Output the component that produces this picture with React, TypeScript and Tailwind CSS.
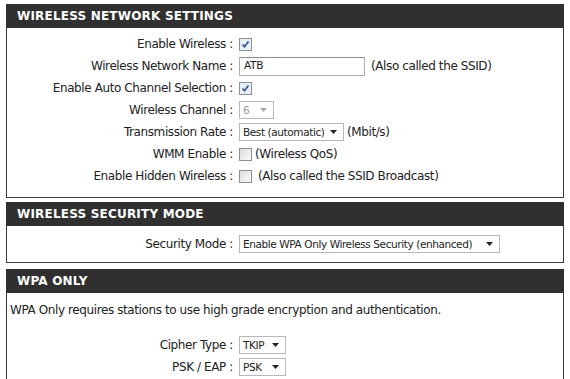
import React from 'react';

function Check({ checked = false }: { checked?: boolean }) {
  return (
    <span className="inline-flex h-[13px] w-[13px] shrink-0 items-center justify-center border border-[#8e8f8f] bg-gradient-to-br from-[#dcdcdc] to-[#fbfbfb]">
      {checked && (
        <svg viewBox="0 0 11 11" className="h-[11px] w-[11px]">
          <rect x="0" y="0" width="11" height="11" fill="#e6eef7" />
          <path d="M2.5 5.5 L4.5 7.8 L8.5 2.5" fill="none" stroke="#2d4e93" strokeWidth="1.6" />
        </svg>
      )}
    </span>
  );
}

function Select({ value, width, disabled = false }: { value: string; width: string; disabled?: boolean }) {
  return (
    <span
      className={`inline-flex h-[18px] items-center justify-between border border-[#b5b8bd] bg-white pl-[3px] pr-[6px] text-[10.5px] tracking-[-0.4px] ${width} ${
        disabled ? 'text-[#9a9a9a]' : 'text-[#222]'
      }`}
    >
      <span className="leading-none">{value}</span>
      <svg viewBox="0 0 7 4" className="h-[4px] w-[7px] shrink-0">
        <path d="M0 0 H7 L3.5 4 Z" fill={disabled ? '#a8a8a8' : '#222'} />
      </svg>
    </span>
  );
}

function Row({ label, children }: { label: string; children: React.ReactNode }) {
  return (
    <div className="flex h-[22px] items-center">
      <div className="w-[226px] shrink-0 whitespace-nowrap text-right">{label}</div>
      <div className="ml-[6px] flex items-center gap-[3px] whitespace-nowrap">{children}</div>
    </div>
  );
}

function Section({ title, children, className = '' }: { title: string; children: React.ReactNode; className?: string }) {
  return (
    <section className={className}>
      <h2 className="flex h-[24px] items-center bg-[#303030] pl-[11px] text-[12px] font-bold tracking-[0.2px] text-white">
        {title}
      </h2>
      <div className="border-x border-b border-[#3a3a3a] bg-white">{children}</div>
    </section>
  );
}

export default function App() {
  return (
    <div className="h-[379px] w-[570px] overflow-hidden bg-white font-['DejaVu_Sans',Verdana,sans-serif] text-[12px] tracking-[-0.4px] text-[#222]">
      <div className="ml-[6px] w-[558px] pt-[4px]">
        <Section title="WIRELESS NETWORK SETTINGS">
          <div className="pt-[5px] pb-[10px]">
            <Row label="Enable Wireless :">
              <Check checked />
            </Row>
            <Row label="Wireless Network Name :">
              <span className="flex h-[19px] w-[126px] items-center border border-[#abadb3] border-t-[#8d9197] pl-[4px] text-[10.5px] tracking-[-0.3px]">
                ATB
              </span>
              <span className="ml-[3px]">(Also called the SSID)</span>
            </Row>
            <Row label="Enable Auto Channel Selection :">
              <Check checked />
            </Row>
            <Row label="Wireless Channel :">
              <Select value="6" width="w-[35px]" disabled />
            </Row>
            <Row label="Transmission Rate :">
              <Select value="Best (automatic)" width="w-[105px]" />
              <span>(Mbit/s)</span>
            </Row>
            <Row label="WMM Enable :">
              <Check />
              <span>(Wireless QoS)</span>
            </Row>
            <Row label="Enable Hidden Wireless :">
              <Check />
              <span className="ml-[3px]">(Also called the SSID Broadcast)</span>
            </Row>
          </div>
        </Section>

        <Section title="WIRELESS SECURITY MODE" className="mt-[4px]">
          <div className="py-[7px]">
            <Row label="Security Mode :">
              <Select value="Enable WPA Only Wireless Security (enhanced)" width="w-[261px]" />
            </Row>
          </div>
        </Section>

        <Section title="WPA ONLY" className="mt-[6px]">
          <div className="pt-[8px] pb-[20px]">
            <p className="pl-[3px]">WPA Only requires stations to use high grade encryption and authentication.</p>
            <div className="mt-[15px]">
              <Row label="Cipher Type :">
                <Select value="TKIP" width="w-[47px]" />
              </Row>
              <Row label="PSK / EAP :">
                <Select value="PSK" width="w-[47px]" />
              </Row>
            </div>
          </div>
        </Section>
      </div>
    </div>
  );
}
